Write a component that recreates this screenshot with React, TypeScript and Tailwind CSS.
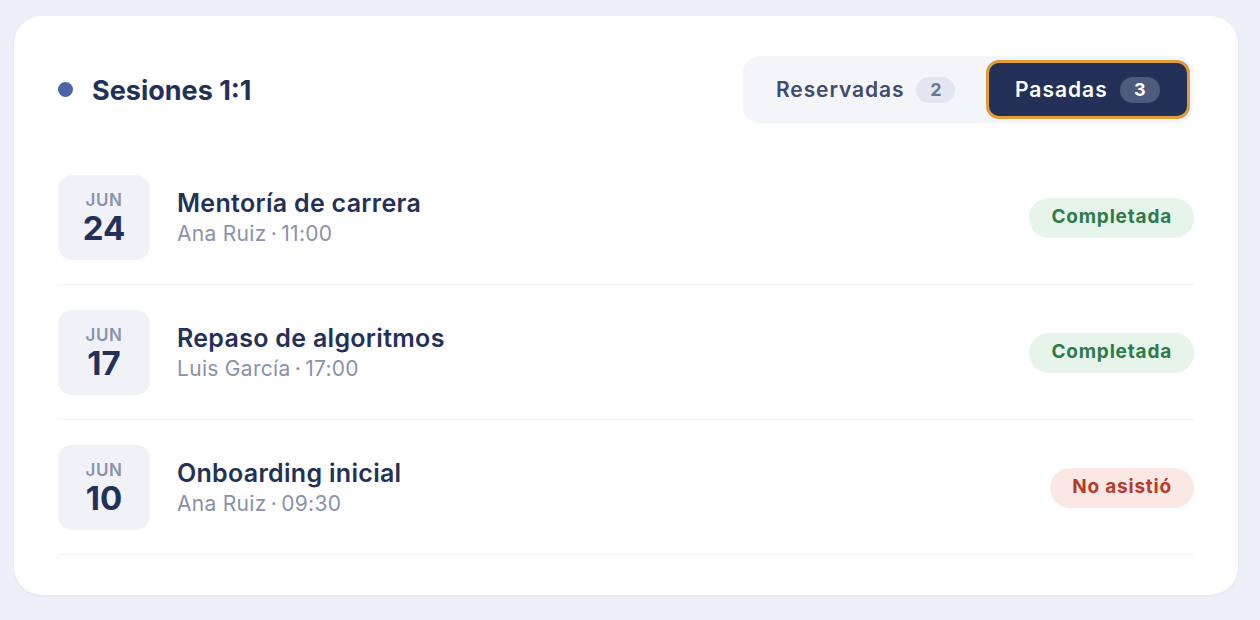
import React from "react";

type Row = { m: string; d: string; title: string; who: string; time: string; status: "ok" | "no" };

const rows: Row[] = [
  { m: "JUN", d: "24", title: "Mentoría de carrera", who: "Ana Ruiz", time: "11:00", status: "ok" },
  { m: "JUN", d: "17", title: "Repaso de algoritmos", who: "Luis García", time: "17:00", status: "ok" },
  { m: "JUN", d: "10", title: "Onboarding inicial", who: "Ana Ruiz", time: "09:30", status: "no" },
];

export default function App() {
  return (
    <div
      className="w-[1260px] h-[620px] bg-[#edf0f8] pt-[16px] pl-[14px] pr-[22px]"
      style={{ fontFamily: "Inter, 'Noto Sans', sans-serif" }}
    >
      <div className="bg-white rounded-[28px] px-[44px] pt-[40px] pb-[40px] shadow-[0_1px_3px_rgba(30,40,80,0.06)]">
        <div className="flex items-center justify-between">
          <div className="flex items-center">
            <span className="w-[15px] h-[15px] rounded-full bg-[#4d65a6] mr-[19px]" />
            <span className="text-[27px] font-bold text-[#233158] leading-[34px] mt-[2px]">Sesiones 1:1</span>
          </div>
          <div className="flex items-center bg-[#f4f5fa] rounded-[16px] w-[450px] h-[67px] pl-[33px] pr-[3px] mr-[1px]">
            <span className="text-[21px] font-semibold text-[#3f4b70] tracking-[0.9px]">Reservadas</span>
            <span className="ml-[12px] h-[26px] w-[39px] rounded-full bg-[#e3e6f0] text-[#6b7593] text-[18px] font-bold flex items-center justify-center">2</span>
            <div className="ml-auto h-[59px] w-[204px] rounded-[13px] bg-[#233158] border-[3px] border-[#e09d36] flex items-center pl-[26px]">
              <span className="text-[21px] font-semibold text-white tracking-[1px]">Pasadas</span>
              <span className="ml-[12px] h-[26px] w-[40px] rounded-full bg-[#4e5a7e] text-white text-[18px] font-bold flex items-center justify-center">3</span>
            </div>
          </div>
        </div>
        <div className="mt-[27px]">
          {rows.map((r) => (
            <div key={r.d} className="flex items-center pt-[25px] pb-[24px] border-b border-[#eef0f5]">
              <div className="w-[92px] h-[85px] rounded-[14px] bg-[#f0f2f8] flex flex-col items-center justify-center pt-[1px]">
                <span className="text-[17px] font-semibold text-[#8a93ad] leading-[20px] tracking-[0.6px]">{r.m}</span>
                <span className="text-[33px] font-bold text-[#233158] leading-[36px]">{r.d}</span>
              </div>
              <div className="ml-[27px] flex-1">
                <div className="text-[25px] font-semibold text-[#233158] leading-[30px] tracking-[0.3px]">{r.title}</div>
                <div className="text-[21px] text-[#8a91aa] leading-[28px] mt-[2px] tracking-[0.3px]">
                  {r.who}{"\u2009·\u2009"}{r.time}
                </div>
              </div>
              {r.status === "ok" ? (
                <span className="h-[40px] px-[22px] rounded-full bg-[#e6f4ea] text-[#2f7a4a] text-[19px] font-bold flex items-center tracking-[0.8px]">Completada</span>
              ) : (
                <span className="h-[40px] px-[22px] rounded-full bg-[#fbe8e4] text-[#b83a2a] text-[19px] font-bold flex items-center tracking-[0.8px]">No asistió</span>
              )}
            </div>
          ))}
        </div>
      </div>
    </div>
  );
}
